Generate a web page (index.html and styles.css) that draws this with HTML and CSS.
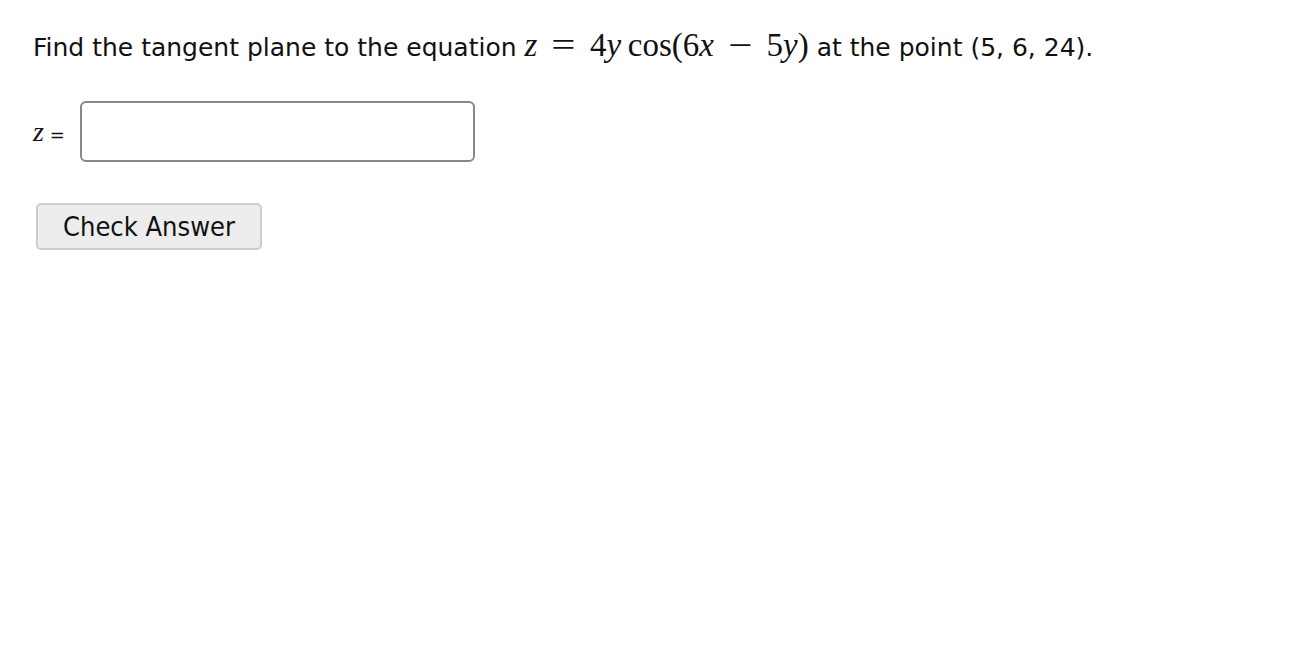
FILE: index.html
```html
<!DOCTYPE html>
<html>
<head>
<meta charset="utf-8">
<link rel="stylesheet" href="styles.css">
</head>
<body>
<div class="page">
  <p class="question">Find the tangent plane to the equation <span class="math"><i>z</i><span class="op">=</span>4<i>y</i>&thinsp;cos(6<i>x</i><span class="op">&minus;</span>5<i>y</i>)</span> at the point (5, 6, 24).</p>
  <div class="answer-row">
    <span class="label"><i class="mi">z</i> =</span>
    <input class="answer" type="text">
  </div>
  <button class="check">Check Answer</button>
</div>
</body>
</html>
```
FILE: styles.css
```css
html, body {
  margin: 0;
  padding: 0;
  background: #fff;
}
.page {
  padding: 24px 33px;
  font-family: "DejaVu Sans", sans-serif;
  font-size: 25px;
  color: #111;
}
.question {
  margin: 0;
  line-height: 42px;
}
.math {
  font-family: "Liberation Serif", "DejaVu Serif", serif;
  font-size: 33px;
}
.math i {
  font-style: italic;
}
.op {
  display: inline-block;
  margin: 0 17px;
  transform: scaleX(1.3);
}
.answer-row {
  display: flex;
  align-items: center;
  gap: 13px;
  margin-top: 32px;
}
.label {
  font-size: 18px;
  width: 34px;
}
.mi {
  font-family: "Liberation Serif", serif;
  font-size: 28px;
}
.answer {
  width: 395px;
  height: 61px;
  border: 2px solid #888;
  border-radius: 6px;
  box-sizing: border-box;
  padding: 0 8px;
  font-size: 22px;
}
.check {
  display: block;
  margin-top: 41px;
  margin-left: 3px;
  width: 226px;
  height: 47px;
  background: #ededed;
  border: 2px solid #ccc;
  border-radius: 5px;
  font-family: "DejaVu Sans Condensed", "DejaVu Sans", sans-serif;
  font-size: 27px;
  color: #111;
}
```
